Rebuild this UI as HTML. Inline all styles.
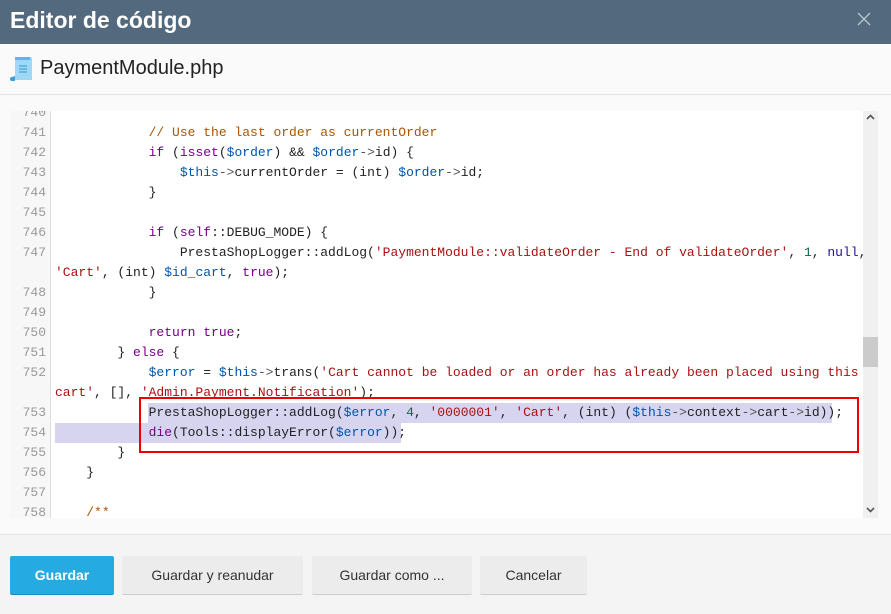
<!DOCTYPE html>
<html><head><meta charset="utf-8"><style>
*{margin:0;padding:0;box-sizing:border-box}
body{width:891px;height:614px;overflow:hidden;background:#fafafa;font-family:"Liberation Sans",sans-serif;position:relative}
.top{position:absolute;left:0;top:0;width:891px;height:44px;background:#536a7e;color:#fff;font-size:23px;font-weight:bold;padding:7px 0 0 10px}
.x{position:absolute;right:20px;top:12px;width:14px;height:14px}
.sub{position:absolute;left:0;top:44px;width:891px;height:51px;background:#fafafa;border-bottom:1px solid #e4e4e4}
.sub .t{position:absolute;left:40px;top:13px;font-size:20px;color:#222}
.ed{position:absolute;left:10px;top:111px;width:868px;height:407px;background:#fff;overflow:hidden}
.gut{position:absolute;left:0;top:0;width:41px;height:407px;background:#f7f7f7;border-right:1px solid #ddd}
.code{position:absolute;left:0;top:-8px;width:853px;font-family:"Liberation Mono",monospace;font-size:13px;color:#222}
.r{position:relative;height:20px;line-height:20px;white-space:pre}
.n{position:absolute;left:0;width:36px;text-align:right;color:#999}
.c{position:absolute;left:45px}
.k{color:#708}.v{color:#05a}.s{color:#a11}.m{color:#164}.cm{color:#a50}.a{color:#555}.nl{color:#219}
.sel{position:absolute;background:#d7d4f0;height:20px}
.sb{position:absolute;left:853px;top:0;width:15px;height:407px;background:#f0f0f0}
.th{position:absolute;left:0;top:226px;width:15px;height:30px;background:#cbcbcb}
.box{position:absolute;left:139px;top:397px;width:720px;height:56px;border:2px solid #e00}
.foot{position:absolute;left:0;top:534px;width:891px;height:80px;background:#f4f4f4;border-top:1px solid #e4e4e4}
.b{position:absolute;top:21px;height:39px;background:#ececec;border-bottom:1px solid #ccc;border-radius:2px;font-size:14px;color:#333;text-align:center;line-height:39px}
</style></head><body>
<div class="top">Editor de código
<svg class="x" viewBox="0 0 14 14"><path d="M1 1L13 13M13 1L1 13" stroke="#b8c4ce" stroke-width="1.3"/></svg></div>
<div class="sub">
<svg style="position:absolute;left:10px;top:12px" width="23" height="26" viewBox="0 0 23 26"><path d="M5 1h15a2 2 0 0 1 2 2v21H5z" fill="#9ed8f6"/><path d="M5 1h15v3H5z" fill="#5bb7e8"/><path d="M5 20v5H2a2 2 0 0 1 0-4z" fill="#3b9fd8"/><path d="M9 10h8M9 13h8M9 16h8" stroke="#4aa3d8" stroke-width="1.2"/></svg>
<div class="t">PaymentModule.php</div></div>
<div class="ed"><div class="gut"></div>
<div class="code">
<div class="sel" style="left:138px;top:300px;width:684px"></div>
<div class="sel" style="left:45px;top:320px;width:346px"></div>
<div class="r"><span class="n">740</span></div>
<div class="r"><span class="n">741</span><span class="c">            <span class="cm">// Use the last order as currentOrder</span></span></div>
<div class="r"><span class="n">742</span><span class="c">            <span class="k">if</span> (<span class="k">isset</span>(<span class="v">$order</span>) &amp;&amp; <span class="v">$order</span><span class="a">-&gt;</span>id) {</span></div>
<div class="r"><span class="n">743</span><span class="c">                <span class="v">$this</span><span class="a">-&gt;</span>currentOrder = (int) <span class="v">$order</span><span class="a">-&gt;</span>id;</span></div>
<div class="r"><span class="n">744</span><span class="c">            }</span></div>
<div class="r"><span class="n">745</span></div>
<div class="r"><span class="n">746</span><span class="c">            <span class="k">if</span> (<span class="k">self</span>::DEBUG_MODE) {</span></div>
<div class="r"><span class="n">747</span><span class="c">                PrestaShopLogger::addLog(<span class="s">'PaymentModule::validateOrder - End of validateOrder'</span>, <span class="m">1</span>, <span class="nl">null</span>,</span></div>
<div class="r"><span class="c"><span class="s">'Cart'</span>, (int) <span class="v">$id_cart</span>, <span class="k">true</span>);</span></div>
<div class="r"><span class="n">748</span><span class="c">            }</span></div>
<div class="r"><span class="n">749</span></div>
<div class="r"><span class="n">750</span><span class="c">            <span class="k">return</span> <span class="k">true</span>;</span></div>
<div class="r"><span class="n">751</span><span class="c">        } <span class="k">else</span> {</span></div>
<div class="r"><span class="n">752</span><span class="c">            <span class="v">$error</span> = <span class="v">$this</span><span class="a">-&gt;</span>trans(<span class="s">'Cart cannot be loaded or an order has already been placed using this</span></span></div>
<div class="r"><span class="c"><span class="s">cart'</span>, [], <span class="s">'Admin.Payment.Notification'</span>);</span></div>
<div class="r"><span class="n">753</span><span class="c">            PrestaShopLogger::addLog(<span class="v">$error</span>, <span class="m">4</span>, <span class="s">'0000001'</span>, <span class="s">'Cart'</span>, (int) (<span class="v">$this</span><span class="a">-&gt;</span>context<span class="a">-&gt;</span>cart<span class="a">-&gt;</span>id));</span></div>
<div class="r"><span class="n">754</span><span class="c">            <span class="k">die</span>(Tools::displayError(<span class="v">$error</span>));</span></div>
<div class="r"><span class="n">755</span><span class="c">        }</span></div>
<div class="r"><span class="n">756</span><span class="c">    }</span></div>
<div class="r"><span class="n">757</span></div>
<div class="r"><span class="n">758</span><span class="c">    <span class="cm">/**</span></span></div>
</div>
<div class="sb"><div class="th"></div>
<svg style="position:absolute;left:3px;top:3px" width="9" height="7" viewBox="0 0 9 7"><path d="M1 5L4.5 1.5L8 5" stroke="#555" stroke-width="1.6" fill="none"/></svg>
<svg style="position:absolute;left:3px;top:395px" width="9" height="7" viewBox="0 0 9 7"><path d="M1 2L4.5 5.5L8 2" stroke="#555" stroke-width="1.6" fill="none"/></svg>
</div></div>
<div class="box"></div>
<div class="foot">
<div class="b" style="left:10px;width:104px;background:#25aae1;border-bottom-color:#1d8fbf;color:#fff;font-weight:bold">Guardar</div>
<div class="b" style="left:122px;width:181px">Guardar y reanudar</div>
<div class="b" style="left:312px;width:160px">Guardar como ...</div>
<div class="b" style="left:480px;width:107px">Cancelar</div>
</div>
</body></html>
